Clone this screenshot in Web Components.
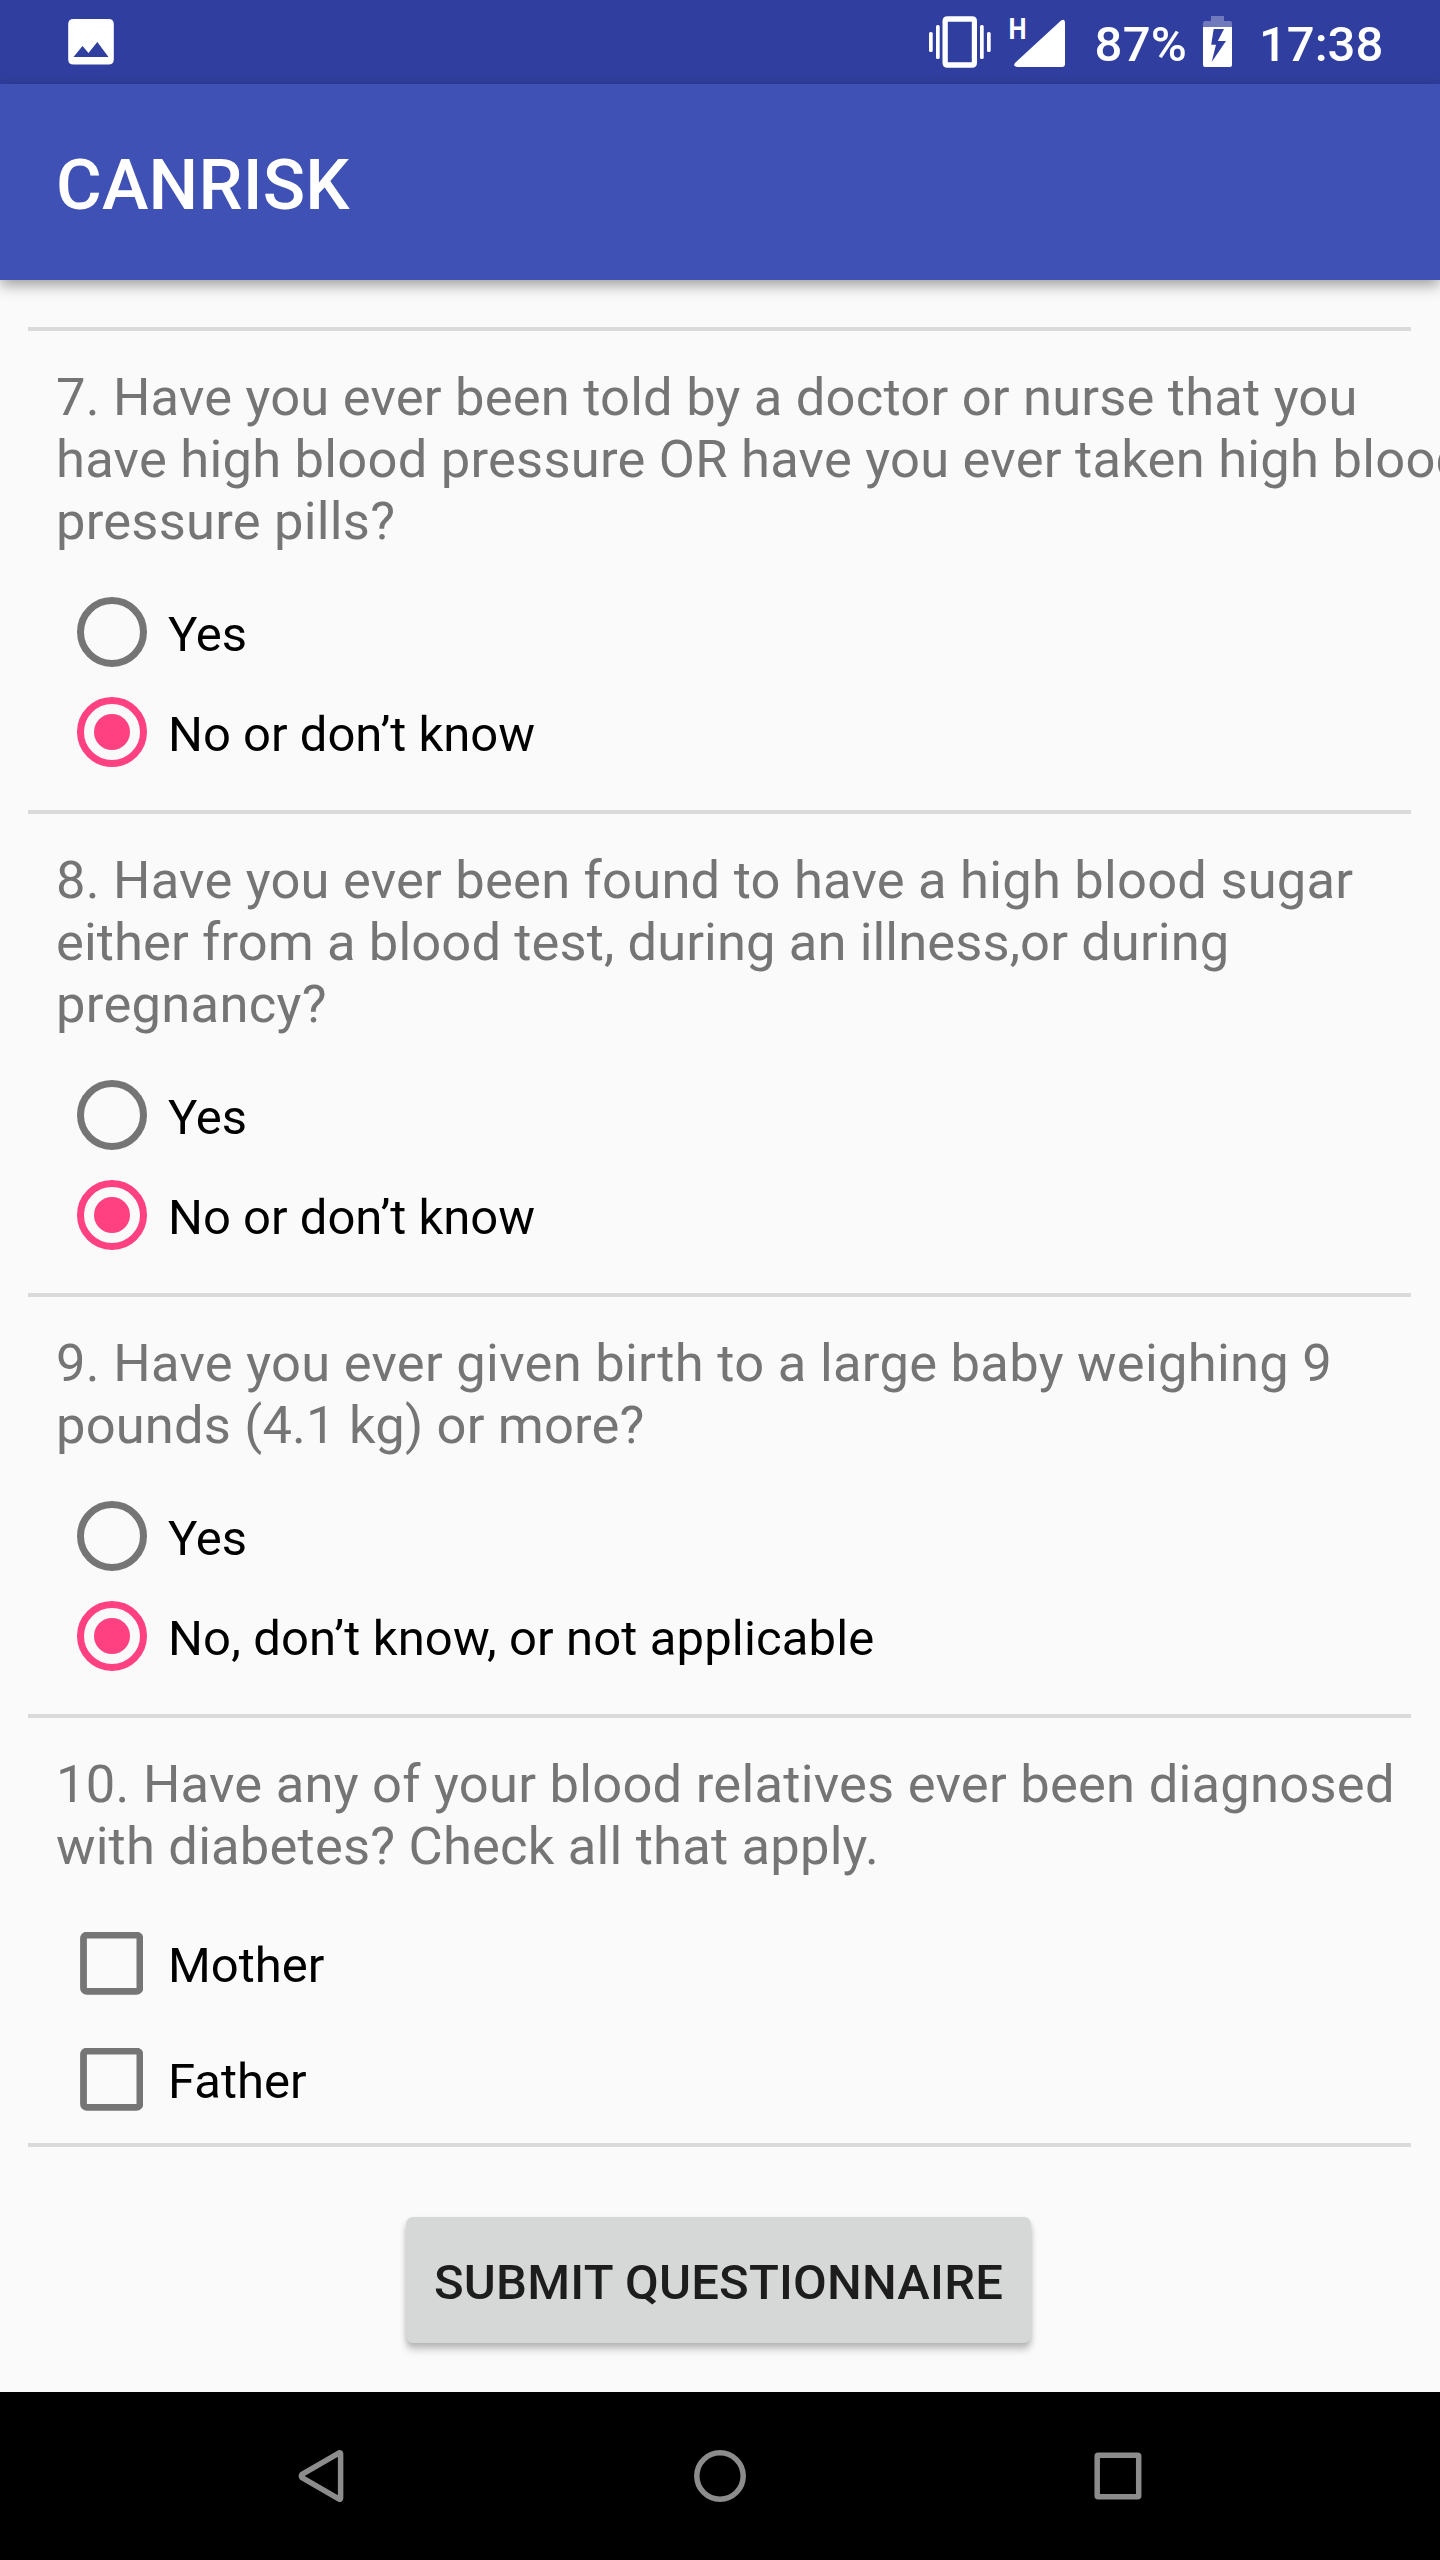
<!DOCTYPE html>
<html lang="en">
<head>
<meta charset="utf-8">
<title>CANRISK</title>
<style>
html, body { margin: 0; padding: 0; }
body { width: 1440px; height: 2560px; overflow: hidden; background: #fafafa; font-family: Roboto, "Noto Sans", sans-serif; }
</style>
</head>
<body>
<risk-app></risk-app>
<script>
const define = (name, html) => {
  const template = document.createElement('template');
  template.innerHTML = html;
  customElements.define(name, class extends HTMLElement {
    constructor() {
      super();
      this.attachShadow({ mode: 'open' }).append(template.content.cloneNode(true));
    }
  });
};

define('status-bar', `
<style>
:host { display: flex; height: 84px; background: #303f9f; color: #fff; font-size: 49px; font-weight: 500; line-height: 84px; box-sizing: border-box; padding-left: 68px; justify-content: space-between; }
.group { display: flex; height: 84px; width: 513px; }
svg { display: block; height: 84px; flex: none; }
.level { margin-left: 28.500px; width: 86.500px; white-space: nowrap; padding-top: 3px; letter-spacing: .3px; }
.clock { padding-top: 3px; margin-left: 26px; white-space: nowrap; }
.battery { margin-left: 22px; }
</style>
<svg width="46" viewBox="0 0 46 84"><path fill="#fff" fill-rule="evenodd" d="M5.500 19H40.500Q45.800 19 45.800 24.300V59.200Q45.800 64.500 40.500 64.500H5.500Q.2 64.500 .2 59.200V24.300Q.2 19 5.500 19ZM5.500 57H40.500L29.300 42L20.500 53L14.500 46Z"/></svg>
<div class="group">
<svg width="139" viewBox="927 0 139 84"><g fill="#fff"><rect x="929" y="32" width="3.700" height="20" rx="1.500"/><rect x="936" y="25" width="3.700" height="34" rx="1.500"/><rect x="980" y="25" width="3.700" height="34" rx="1.500"/><rect x="987" y="32" width="3.700" height="20" rx="1.500"/><path fill-rule="evenodd" d="M947.500 16.300H972Q977 16.300 977 21.300V62.700Q977 67.700 972 67.700H947.500Q942.500 67.700 942.500 62.700V21.300Q942.500 16.300 947.500 16.300ZM947.800 21.800V62.200H971.800V21.800Z"/><path d="M1060.500 21Q1064.700 18 1065 22.500V64Q1065 67 1062 67H1018Q1012 66.500 1015.500 62.500Z"/></g><text x="1008.500" y="39.300" font-size="30" font-weight="700" textLength="18" lengthAdjust="spacingAndGlyphs" fill="#fff">H</text></svg>
<span class="level">87%</span>
<svg class="battery" width="30" viewBox="1203 0 30 84"><path fill="#7079bc" d="M1203 27V23Q1203 21 1205 21H1211V16H1224V21H1230Q1232 21 1232 23V27Z"/><path fill="#fff" fill-rule="evenodd" d="M1203 27H1232V65Q1232 67 1230 67H1205Q1203 67 1203 65ZM1213.700 29L1211.200 44.700H1216L1211.700 62L1226 41H1217.800L1224 29Z"/></svg>
<span class="clock">17:38</span>
</div>`);

define('app-bar', `
<style>
:host { display: flex; align-items: center; height: 196px; padding: 5px 56px 0; box-sizing: border-box; background: #3f51b5; color: #fff; font-size: 70px; font-weight: 500; letter-spacing: .2px; position: relative; box-shadow: 0 5px 14px rgba(0,0,0,.38); }
</style><slot></slot>`);

define('question-card', `
<style>
:host { display: block; border-top: 4px solid #dadada; margin: 0 29px 0 28px; padding: 35px 0 28px; }
.q { display: flex; flex-direction: column; padding-left: 28px; font-size: 52.5px; line-height: 62px; color: #757575; white-space: nowrap; }
.options { display: flex; flex-direction: column; padding: var(--gap, 30px) 0 0 49px; }
</style><div class="q"><slot name="question"></slot></div><div class="options"><slot></slot></div>`);

define('radio-option', `
<style>
:host { display: flex; align-items: center; height: 100px; font-size: 49px; color: #000; gap: 21px; white-space: nowrap; }
.ring { width: 70px; height: 70px; box-sizing: border-box; border: 7px solid #757575; border-radius: 50%; display: flex; align-items: center; justify-content: center; flex: none; }
.dot { width: 36px; height: 36px; border-radius: 50%; }
:host([checked]) .ring { border-color: #ff4081; }
:host([checked]) .dot { background: #ff4081; }
.label { padding-top: 5px; }
</style><span class="ring"><span class="dot"></span></span><span class="label"><slot></slot></span>`);

define('check-option', `
<style>
:host { display: flex; align-items: center; height: 116px; font-size: 49px; color: #000; gap: 25px; padding-left: 3px; white-space: nowrap; }
svg { width: 63px; height: 63px; flex: none; display: block; }
.label { padding-top: 4px; }
</style><svg viewBox="0 0 63 63"><rect x="3.500" y="3" width="56.400" height="56.400" rx="3.500" fill="none" stroke="#757575" stroke-width="6.800"/></svg><span class="label"><slot></slot></span>`);

define('raised-button', `
<style>
:host { display: flex; align-items: center; justify-content: center; width: 625px; height: 126px; border-radius: 7px; background: #d6d8d7; color: #1d1d1d; font-size: 49px; font-weight: 500; letter-spacing: .2px; white-space: nowrap; box-shadow: 0 7px 7px rgba(0,0,0,.2), 0 2px 5px rgba(0,0,0,.12); }
span { padding-top: 4px; }
</style><span><slot></slot></span>`);

define('nav-bar', `
<style>
:host { display: flex; align-items: center; justify-content: space-between; height: 168px; box-sizing: border-box; padding: 0 290px; background: #000; }
svg { display: block; width: 64px; height: 64px; fill: none; stroke: #8c8c8c; stroke-width: 5.500; stroke-linejoin: round; }
</style>
<svg viewBox="290 2444 64 64"><path d="M339.200 2452.800Q340.600 2452.500 340.600 2454V2498Q340.600 2499.500 339.200 2499.200L302 2477.600Q300.800 2476 302 2474.400Z"/></svg>
<svg viewBox="688 2444 64 64"><circle cx="720" cy="2476" r="23.200"/></svg>
<svg viewBox="1086 2444 64 64"><rect x="1097.200" y="2455.200" width="41.500" height="41.500" rx="1"/></svg>`);

define('risk-app', `
<style>
:host { display: flex; flex-direction: column; width: 1440px; height: 2560px; overflow: hidden; background: #fafafa; }
main { flex: 1; min-height: 0; padding-top: 47px; overflow: hidden; display: flex; flex-direction: column; }
.last { padding-bottom: 6px; --gap: 28px; }
.footer { border-top: 4px solid #dadada; margin: 0 29px 0 28px; padding: 70px 2px 0 0; display: flex; justify-content: center; }
</style>
<status-bar></status-bar>
<app-bar>CANRISK</app-bar>
<main>
<question-card><span slot="question" style="letter-spacing:.2px">7. Have you ever been told by a doctor or nurse that you</span><span slot="question" style="letter-spacing:.24px">have high blood pressure OR have you ever taken high blood</span><span slot="question" style="letter-spacing:.24px">pressure pills?</span><radio-option>Yes</radio-option><radio-option checked>No or don’t know</radio-option></question-card>
<question-card><span slot="question" style="letter-spacing:.22px">8. Have you ever been found to have a high blood sugar</span><span slot="question" style="letter-spacing:.1px">either from a blood test, during an illness,or during</span><span slot="question" style="letter-spacing:.3px">pregnancy?</span><radio-option>Yes</radio-option><radio-option checked>No or don’t know</radio-option></question-card>
<question-card><span slot="question" style="letter-spacing:.28px">9. Have you ever given birth to a large baby weighing 9</span><span slot="question" style="letter-spacing:.17px">pounds (4.1 kg) or more?</span><radio-option>Yes</radio-option><radio-option checked style="letter-spacing:.13px">No, don’t know, or not applicable</radio-option></question-card>
<question-card class="last"><span slot="question" style="letter-spacing:.25px">10. Have any of your blood relatives ever been diagnosed</span><span slot="question" style="letter-spacing:.2px">with diabetes? Check all that apply.</span><check-option>Mother</check-option><check-option>Father</check-option></question-card>
<div class="footer"><raised-button>SUBMIT QUESTIONNAIRE</raised-button></div>
</main>
<nav-bar></nav-bar>`);
</script>
</body>
</html>
